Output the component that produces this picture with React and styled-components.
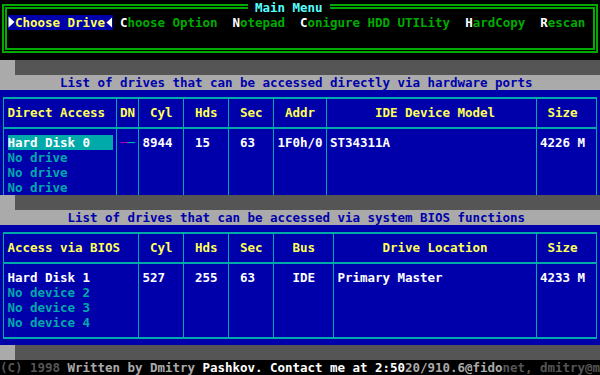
import React from "react";
import styled, { createGlobalStyle } from "styled-components";

// text-mode palette
const C = {
  black: "#000000",
  blue: "#0000AA",
  green: "#00AA00",
  cyan: "#00AAAA",
  magenta: "#AA00AA",
  lgray: "#AAAAAA",
  dgray: "#555555",
  lcyan: "#55FFFF",
  yellow: "#FFFF55",
  white: "#FFFFFF",
};

// one character cell of the 80x25 screen
const CH = 7.5;
const ROW = 15;

const menu = [
  { key: "C", rest: "hoose Drive", active: true },
  { key: "C", rest: "hoose Option" },
  { key: "N", rest: "otepad" },
  { key: "C", rest: "onigure HDD UTILity" },
  { key: "H", rest: "ardCopy" },
  { key: "R", rest: "escan" },
];

// w = width in chars, head/body = offset of the text inside the cell
const directCols = [
  { w: 15, title: "Direct Access", head: 0, body: 0 },
  { w: 3, title: "DN", head: 0, body: 0 },
  { w: 6, title: "Cyl", head: 1, body: 0 },
  { w: 6, title: "Hds", head: 1, body: 1 },
  { w: 6, title: "Sec", head: 1, body: 1 },
  { w: 7, title: "Addr", head: 1, body: 0 },
  { w: 28, title: "IDE Device Model", head: 6, body: 0 },
  { w: 8, title: "Size", head: 1, body: 0 },
];

const biosCols = [
  { w: 18, title: "Access via BIOS", head: 0, body: 0 },
  { w: 6, title: "Cyl", head: 1, body: 0 },
  { w: 6, title: "Hds", head: 1, body: 1 },
  { w: 6, title: "Sec", head: 1, body: 1 },
  { w: 8, title: "Bus", head: 2, body: 2 },
  { w: 27, title: "Drive Location", head: 6, body: 0 },
  { w: 8, title: "Size", head: 1, body: 0 },
];

const directRows = [
  ["Hard Disk 0", "DN", "8944", "15", "63", "1F0h/0", "ST34311A", "4226 M"],
  ["No drive"],
  ["No drive"],
  ["No drive"],
];

const biosRows = [
  ["Hard Disk 1", "527", "255", "63", "IDE", "Primary Master", "4233 M"],
  ["No device 2"],
  ["No device 3"],
  ["No device 4"],
];

const footer = [
  { text: "(C) 1998 ", color: C.dgray },
  { text: "Written by Dmitry ", color: C.lgray },
  { text: "Pashkov. Contact me at 2:50", color: C.white },
  { text: "20/910.6@fido", color: C.lgray },
  { text: "net, dmitry@m", color: C.dgray },
];

const GlobalStyle = createGlobalStyle`
  html, body {
    margin: 0;
    padding: 0;
    background: #000;
  }
`;

const Screen = styled.div`
  width: 600px;
  height: 375px;
  overflow: hidden;
  display: flex;
  flex-direction: column;
  background: ${C.black};
  font-family: "DejaVu Sans Mono", "Liberation Mono", monospace;
  font-size: 12.5px;
  letter-spacing: -0.025px;
  line-height: ${ROW}px;
  font-weight: bold;
  white-space: pre;
`;

const MenuArea = styled.div`
  flex: none;
  height: ${ROW * 4}px;
  padding: 4px 2px 0;
  box-sizing: border-box;
`;

const MenuBox = styled.div`
  position: relative;
  height: 49px;
  box-sizing: border-box;
  border: 5px double ${C.green};
  padding: 6px 0 0 0.5px;
`;

const MenuTitle = styled.div`
  position: absolute;
  top: -9px;
  left: 240.5px;
  padding: 0 ${CH}px;
  background: ${C.black};
  color: ${C.lcyan};
`;

const MenuBar = styled.div`
  display: flex;
  height: ${ROW}px;
`;

const MenuItem = styled.span`
  display: inline-flex;
  align-items: center;
  padding: 0 ${(p) => (p.$active ? 0 : CH)}px;
  background: ${(p) => (p.$active ? C.blue : "transparent")};
  color: ${(p) => (p.$active ? C.yellow : C.green)};
`;

const Hotkey = styled.span`
  color: ${(p) => (p.$active ? C.yellow : C.white)};
`;

const ArrowSvg = styled.svg`
  display: block;
  width: ${CH}px;
  height: ${ROW}px;
  fill: ${C.white};
`;

const ShadowBar = styled.div`
  flex: none;
  height: ${ROW}px;
  background: linear-gradient(
    to right,
    ${C.lgray} ${CH * 2}px,
    ${C.dgray} ${CH * 2}px
  );
`;

const TitleBar = styled.div`
  flex: none;
  height: ${ROW}px;
  padding-left: ${(p) => p.$col * CH}px;
  background: ${C.lgray};
  color: ${C.blue};
`;

const Panel = styled.div`
  flex: none;
  height: ${(p) => p.$rows * ROW}px;
  box-sizing: border-box;
  padding-top: 7px;
  background: ${C.blue};
`;

const Table = styled.div`
  display: grid;
  grid-template-columns: ${(p) => p.$cols};
  width: max-content;
  margin-left: ${CH / 2 - 0.5}px;
  border-top: 2px solid ${C.cyan};
  border-right: 1px solid ${C.cyan};
  border-bottom: ${(p) => (p.$closed ? `2px solid ${C.cyan}` : "none")};
`;

const HeadCell = styled.div`
  box-sizing: border-box;
  border-left: 1px solid ${C.cyan};
  border-bottom: 2px solid ${C.cyan};
  padding: 6px ${CH / 2 - 0.5}px 7px ${(p) => (p.$pad + 0.5) * CH - 0.5}px;
  color: ${C.yellow};
  overflow: hidden;
`;

const BodyCell = styled.div`
  box-sizing: border-box;
  border-left: 1px solid ${C.cyan};
  padding: ${(p) => (p.$first ? 6 : 0)}px ${CH / 2 - 0.5}px
    ${(p) => (p.$last ? 7 : 0)}px ${(p) => (p.$pad + 0.5) * CH - 0.5}px;
  height: ${(p) => ROW + (p.$first ? 6 : 0) + (p.$last ? 7 : 0)}px;
  color: ${(p) => (p.$dim ? C.cyan : C.white)};
  overflow: hidden;
`;

const Selected = styled.div`
  background: ${C.cyan};
  color: ${C.white};
`;

const Dash = styled.span`
  color: ${(p) => p.$color};
`;

const Footer = styled.div`
  flex: none;
  height: ${ROW}px;
  background: ${C.black};
`;

const FooterPart = styled.span`
  color: ${(p) => p.$color};
`;

const Arrow = ({ left }) => (
  <ArrowSvg viewBox="0 0 7.5 15">
    {left ? (
      <polygon points="7,2.5 1.5,7.5 7,12.5" />
    ) : (
      <polygon points="0.5,1.5 6.5,7 0.5,12.5" />
    )}
  </ArrowSvg>
);

const Menu = () => (
  <MenuArea>
    <MenuBox>
      <MenuTitle>Main Menu</MenuTitle>
      <MenuBar>
        {menu.map((m) => (
          <MenuItem key={m.key + m.rest} $active={m.active}>
            {m.active && <Arrow />}
            <Hotkey $active={m.active}>{m.key}</Hotkey>
            {m.rest}
            {m.active && <Arrow left />}
          </MenuItem>
        ))}
      </MenuBar>
    </MenuBox>
  </MenuArea>
);

const renderCell = (value, ri) => {
  if (value === "DN") {
    return (
      <>
        <Dash $color={C.magenta}>─</Dash>
        <Dash $color={C.cyan}>─</Dash>
      </>
    );
  }
  if (ri === 0 && value === "Hard Disk 0") {
    return <Selected>{value}</Selected>;
  }
  return value || "";
};

const DriveTable = ({ cols, rows, closed }) => (
  <Table $cols={cols.map((c) => `${c.w * CH}px`).join(" ")} $closed={closed}>
    {cols.map((c) => (
      <HeadCell key={c.title} $pad={c.head}>
        {c.title}
      </HeadCell>
    ))}
    {rows.map((row, ri) =>
      cols.map((c, ci) => (
        <BodyCell
          key={`${ri}-${ci}`}
          $pad={c.body}
          $first={ri === 0}
          $last={closed && ri === rows.length - 1}
          $dim={ri > 0}
        >
          {renderCell(row[ci], ri)}
        </BodyCell>
      ))
    )}
  </Table>
);

export default function App() {
  return (
    <>
      <GlobalStyle />
      <Screen>
        <Menu />
        <ShadowBar />
        <TitleBar $col={8}>
          List of drives that can be accessed directly via hardware ports
        </TitleBar>
        <Panel $rows={7}>
          <DriveTable cols={directCols} rows={directRows} />
        </Panel>
        <ShadowBar />
        <TitleBar $col={9}>
          List of drives that can be accessed via system BIOS functions
        </TitleBar>
        <Panel $rows={8}>
          <DriveTable cols={biosCols} rows={biosRows} closed />
        </Panel>
        <ShadowBar />
        <Footer>
          {footer.map((f) => (
            <FooterPart key={f.text} $color={f.color}>
              {f.text}
            </FooterPart>
          ))}
        </Footer>
      </Screen>
    </>
  );
}
